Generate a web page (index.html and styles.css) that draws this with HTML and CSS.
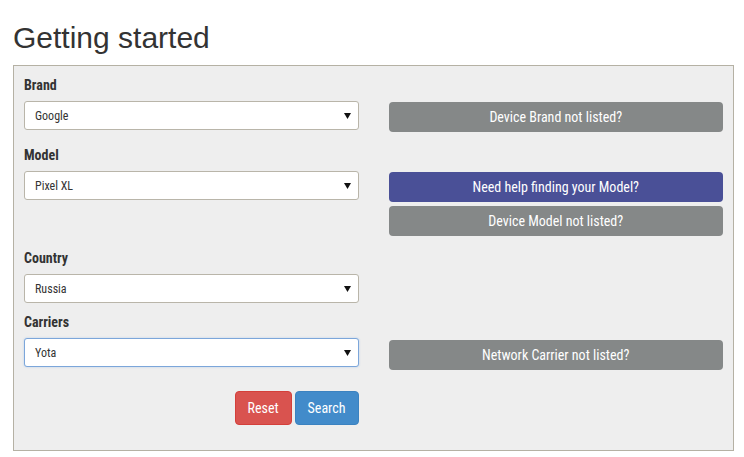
FILE: index.html
```html
<!DOCTYPE html>
<html lang="en">
<head>
<meta charset="utf-8">
<title>Getting started</title>
<link rel="stylesheet" href="styles.css">
</head>
<body>
<div class="page">
  <h2 class="title">Getting started</h2>
  <form class="panel">
    <div class="row row--brand">
      <div class="field">
        <label class="label">Brand</label>
        <div class="select"><span>Google</span><svg class="caret" width="7" height="6" viewBox="0 0 7 6"><polygon points="0,0 7,0 3.5,6" fill="#111"/></svg></div>
      </div>
      <div class="side">
        <button type="button" class="btn-side">Device Brand not listed?</button>
      </div>
    </div>
    <div class="row row--model">
      <div class="field">
        <label class="label">Model</label>
        <div class="select"><span>Pixel XL</span><svg class="caret" width="7" height="6" viewBox="0 0 7 6"><polygon points="0,0 7,0 3.5,6" fill="#111"/></svg></div>
      </div>
      <div class="side">
        <button type="button" class="btn-side btn-side--help">Need help finding your Model?</button>
        <button type="button" class="btn-side">Device Model not listed?</button>
      </div>
    </div>
    <div class="row row--country">
      <div class="field">
        <label class="label">Country</label>
        <div class="select"><span>Russia</span><svg class="caret" width="7" height="6" viewBox="0 0 7 6"><polygon points="0,0 7,0 3.5,6" fill="#111"/></svg></div>
      </div>
      <div class="side"></div>
    </div>
    <div class="row row--carriers">
      <div class="field">
        <label class="label">Carriers</label>
        <div class="select select--focus"><span>Yota</span><svg class="caret" width="7" height="6" viewBox="0 0 7 6"><polygon points="0,0 7,0 3.5,6" fill="#111"/></svg></div>
      </div>
      <div class="side side--low">
        <button type="button" class="btn-side">Network Carrier not listed?</button>
      </div>
    </div>
    <div class="row row--actions">
      <div class="actions">
        <button type="button" class="btn btn--reset">Reset</button>
        <button type="button" class="btn btn--search">Search</button>
      </div>
      <div></div>
    </div>
  </form>
</div>
</body>
</html>
```

FILE: styles.css
```css
* { box-sizing: border-box; }

html, body {
  margin: 0;
  padding: 0;
  background: #ffffff;
}

.page {
  padding: 21px 10px 0 13px;
  font-family: "Roboto Condensed", "Liberation Sans Narrow", Roboto, sans-serif;
  font-stretch: condensed;
  color: #333333;
}

.title {
  margin: 0 0 11px 0;
  font-family: "Liberation Sans", Arial, sans-serif;
  font-stretch: normal;
  font-weight: 400;
  font-size: 30px;
  line-height: 33px;
  color: #333333;
}

.panel {
  background: #eeeeee;
  border: 1px solid #b5b1a4;
  padding: 9px 10px 25px 10px;
}

.row {
  display: grid;
  grid-template-columns: 1fr 1fr;
  column-gap: 30px;
}

.row--brand { margin-bottom: 13px; }
.row--model { margin-bottom: 12px; }
.row--country { margin-bottom: 9px; }
.row--carriers { margin-bottom: 21px; }

.label {
  display: block;
  font-weight: 700;
  font-size: 14px;
  line-height: 20px;
  margin-bottom: 6px;
  color: #333333;
}

.select {
  display: flex;
  align-items: center;
  justify-content: space-between;
  height: 29px;
  padding: 0 7px 0 10px;
  background: #ffffff;
  border: 1px solid #b9b5a9;
  border-radius: 3px;
  font-size: 12px;
  color: #333333;
}

.select--focus {
  border-color: #7ca6da;
  box-shadow: 0 0 2px rgba(102, 160, 230, 0.45);
}

.caret { display: block; }

.side {
  display: flex;
  flex-direction: column;
  gap: 4px;
  padding-top: 27px;
}

.side--low { padding-top: 28px; }

.btn-side {
  display: block;
  width: 100%;
  height: 30px;
  border: 0;
  border-radius: 4px;
  background: #858888;
  color: #ffffff;
  font-family: inherit;
  font-stretch: inherit;
  font-size: 14px;
  font-weight: 400;
  padding: 0;
  cursor: pointer;
}

.btn-side--help { background: #4a5097; }

.actions {
  display: flex;
  justify-content: flex-end;
  gap: 3px;
}

.btn {
  height: 34px;
  padding: 0 12px;
  border: 1px solid transparent;
  border-radius: 4px;
  color: #ffffff;
  font-family: inherit;
  font-stretch: inherit;
  font-size: 14px;
  font-weight: 400;
  cursor: pointer;
}

.btn--reset { background: #d9534f; border-color: #d43f3a; }
.btn--search { background: #428bca; border-color: #3b82c0; }
```
